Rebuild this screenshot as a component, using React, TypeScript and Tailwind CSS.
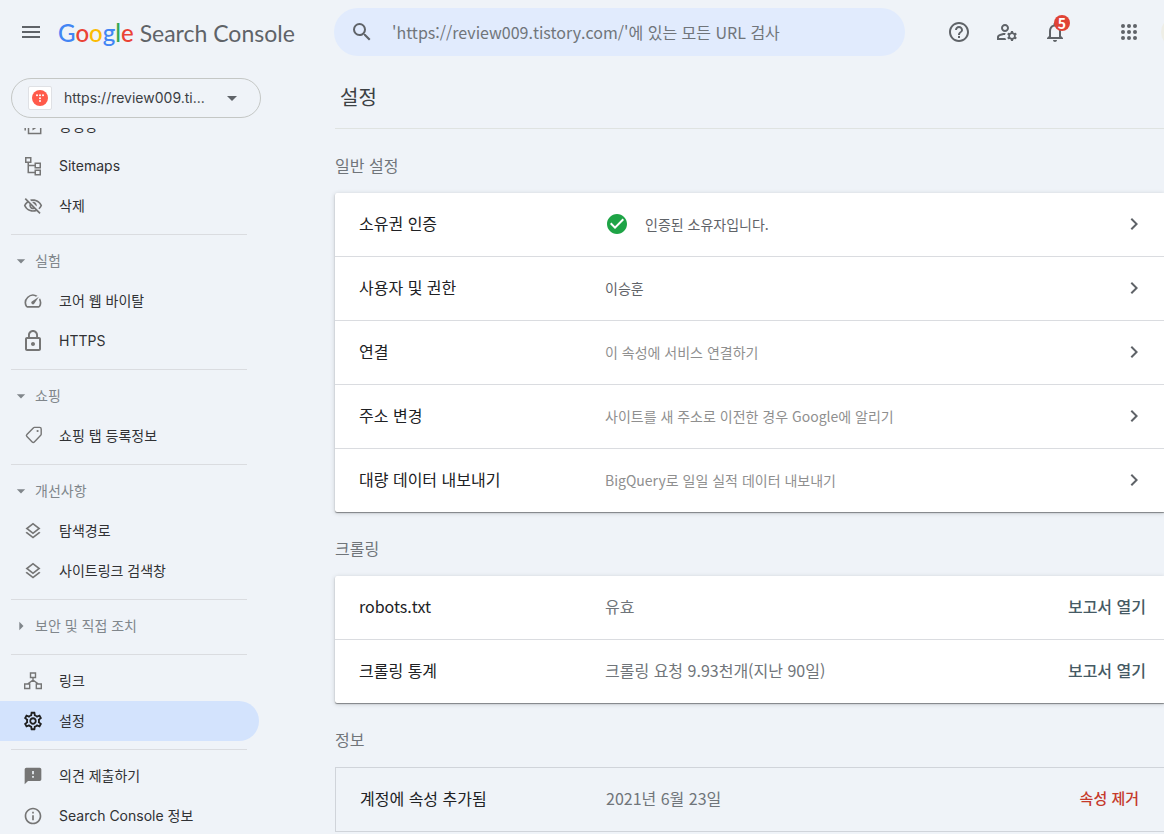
import type { ReactNode } from "react";
import {
  MdArrowDropDown,
  MdArrowRight,
  MdCheckCircle,
  MdChevronRight,
  MdFeedback,
  MdHelpOutline,
  MdInfoOutline,
  MdLockOutline,
  MdMenu,
  MdNotificationsNone,
  MdOutlineLayers,
  MdOutlineManageAccounts,
  MdOutlineSettings,
  MdOutlineVisibilityOff,
  MdSearch,
  MdSpeed,
} from "react-icons/md";

type NavItem = { label: string; icon: ReactNode; active?: boolean };
type NavGroup = { title?: string; collapsed?: boolean; items: NavItem[] };

function VideoPagesIcon() {
  return (
    <svg width="20" height="20" viewBox="0 0 20 20" fill="none" stroke="currentColor" strokeWidth="1.5">
      <path d="M2.2 4v10.5M5.5 4h12.2v13.6H5.5z" />
      <path d="M9.5 8.5v6l4.8-3.2z" fill="currentColor" stroke="none" />
    </svg>
  );
}

function SitemapIcon() {
  return (
    <svg width="20" height="20" viewBox="0 0 20 20" fill="none" stroke="currentColor" strokeWidth="1.5">
      <path d="M2.75 1.75h5v4.5h-5zM12.25 7.25h5v4.5h-5zM12.25 14.25h5v4.5h-5zM5.25 6.5v10h7M5.25 9.5h7" />
    </svg>
  );
}

function LinksIcon() {
  return (
    <svg width="20" height="20" viewBox="0 0 20 20" fill="none" stroke="currentColor" strokeWidth="1.4">
      <path d="M7.5 2h5v4.5h-5zM1.7 13h5v4.5h-5zM13.3 13h5v4.5h-5zM10 6.5v3M4.5 13 10 9.2l5.5 3.8" />
    </svg>
  );
}

function TagIcon() {
  return (
    <svg width="20" height="20" viewBox="0 0 20 20" fill="none" stroke="currentColor" strokeWidth="1.4">
      <path
        d="M11.4 1.4h5.2c.9 0 1.6.7 1.6 1.6v5.2c0 .4-.2.8-.5 1.1l-6.4 6.6c-.6.6-1.5.6-2.1 0l-5.3-5.3c-.6-.6-.6-1.5 0-2.1l6.4-6.6c.3-.3.7-.5 1.1-.5z"
        strokeLinejoin="round"
      />
      <circle cx="14.6" cy="5" r="1.1" fill="currentColor" stroke="none" />
    </svg>
  );
}

function AppsIcon() {
  return (
    <svg width="24" height="24" viewBox="0 0 24 24" fill="currentColor">
      {[6, 12, 18].map((y) => [6, 12, 18].map((x) => <circle key={`${x}-${y}`} cx={x} cy={y} r="2" />))}
    </svg>
  );
}

function Favicon() {
  return (
    <span className="flex size-6 shrink-0 items-center justify-center rounded-xs border border-[#dfe1e5] bg-white">
      <svg width="16" height="16" viewBox="0 0 16 16">
        <circle cx="8" cy="8" r="8" fill="#ff5a4a" />
        <g fill="#fff">
          <circle cx="5" cy="5.3" r="1" />
          <circle cx="8" cy="5.3" r="1" />
          <circle cx="11" cy="5.3" r="1" />
          <circle cx="8" cy="8.2" r="1" />
          <circle cx="8" cy="11.1" r="1" />
        </g>
      </svg>
    </span>
  );
}

const navGroups: NavGroup[] = [
  {
    items: [
      { label: "동영상", icon: <VideoPagesIcon /> },
      { label: "Sitemaps", icon: <SitemapIcon /> },
      { label: "삭제", icon: <MdOutlineVisibilityOff size={20} /> },
    ],
  },
  {
    title: "실험",
    items: [
      { label: "코어 웹 바이탈", icon: <MdSpeed size={20} /> },
      { label: "HTTPS", icon: <MdLockOutline size={24} /> },
    ],
  },
  { title: "쇼핑", items: [{ label: "쇼핑 탭 등록정보", icon: <TagIcon /> }] },
  {
    title: "개선사항",
    items: [
      { label: "탐색경로", icon: <MdOutlineLayers size={20} /> },
      { label: "사이트링크 검색창", icon: <MdOutlineLayers size={20} /> },
    ],
  },
  { title: "보안 및 직접 조치", collapsed: true, items: [] },
  {
    items: [
      { label: "링크", icon: <LinksIcon /> },
      { label: "설정", icon: <MdOutlineSettings size={22} />, active: true },
    ],
  },
  {
    items: [
      { label: "의견 제출하기", icon: <MdFeedback size={20} /> },
      { label: "Search Console 정보", icon: <MdInfoOutline size={20} /> },
    ],
  },
];

const generalRows = [
  { label: "소유권 인증", value: "인증된 소유자입니다.", verified: true, tone: "text-[#5f6368]" },
  { label: "사용자 및 권한", value: "이승훈", tone: "text-[#5f6368]" },
  { label: "연결", value: "이 속성에 서비스 연결하기", tone: "text-[#8f8f8f]" },
  { label: "주소 변경", value: "사이트를 새 주소로 이전한 경우 Google에 알리기", tone: "text-[#8f8f8f]" },
  { label: "대량 데이터 내보내기", value: "BigQuery로 일일 실적 데이터 내보내기", tone: "text-[#8f8f8f]" },
];

const crawlRows = [
  { label: "robots.txt", value: "유효" },
  { label: "크롤링 통계", value: "크롤링 요청 9.93천개(지난 90일)" },
];

function Logo() {
  return (
    <a href="#" className="flex items-baseline gap-1.5 font-['Lato',sans-serif] whitespace-nowrap text-[#5f6368]">
      <span className="text-2xl font-medium">
        <span className="text-[#4285f4]">G</span>
        <span className="text-[#ea4335]">o</span>
        <span className="text-[#fbbc04]">o</span>
        <span className="text-[#4285f4]">g</span>
        <span className="text-[#34a853]">l</span>
        <span className="text-[#ea4335]">e</span>
      </span>
      <span className="text-[23px]">Search Console</span>
    </a>
  );
}

function IconButton({ label, children }: { label: string; children: ReactNode }) {
  return (
    <button type="button" aria-label={label} className="relative flex size-12 shrink-0 items-center justify-center text-[#5f6368]">
      {children}
    </button>
  );
}

function Header() {
  return (
    <header className="flex h-16 shrink-0 items-center overflow-hidden">
      <div className="flex w-[334px] shrink-0 items-center pl-[7px]">
        <IconButton label="메뉴">
          <MdMenu size={24} />
        </IconButton>
        <div className="pt-0.5 pl-[3px]">
          <Logo />
        </div>
      </div>
      <label className="flex h-12 min-w-0 flex-1 items-center gap-[18px] rounded-full bg-[#e1ebfd] px-4">
        <MdSearch size={24} className="shrink-0 text-[#5f6368]" />
        <input
          type="text"
          aria-label="URL 검사"
          placeholder="'https://review009.tistory.com/'에 있는 모든 URL 검사"
          className="min-w-0 flex-1 bg-transparent text-base outline-none placeholder:text-[#70757a]"
        />
      </label>
      <div className="flex shrink-0 items-center pl-[30px]">
        <IconButton label="도움말">
          <MdHelpOutline size={24} />
        </IconButton>
        <IconButton label="사용자 설정">
          <MdOutlineManageAccounts size={24} />
        </IconButton>
        <IconButton label="알림">
          <MdNotificationsNone size={24} />
          <span className="absolute top-[7px] right-[9px] flex size-4 items-center justify-center rounded-full bg-[#e04336] text-sm leading-4 font-bold text-white">
            5
          </span>
        </IconButton>
        <div className="pl-[26px]">
          <IconButton label="Google 앱">
            <AppsIcon />
          </IconButton>
        </div>
        <div className="flex w-[11px] pl-2">
          <button type="button" aria-label="계정" className="size-8 shrink-0 rounded-full bg-[#eeeee6]" />
        </div>
      </div>
    </header>
  );
}

function NavLink({ item }: { item: NavItem }) {
  return (
    <li>
      <a
        href="#"
        aria-current={item.active ? "page" : undefined}
        className={
          item.active
            ? "mr-0.5 flex h-10 items-center rounded-r-full bg-[#d3e3fd] text-[#1f1f1f]"
            : "mr-0.5 flex h-10 items-center text-[#757575]"
        }
      >
        <span className="ml-5 flex w-[26px] shrink-0 justify-center">{item.icon}</span>
        <span className="ml-[13px] text-[#303134]">{item.label}</span>
      </a>
    </li>
  );
}

function Sidebar() {
  return (
    <aside className="flex w-[261px] shrink-0 flex-col font-['Inter','Noto_Sans_CJK_KR',sans-serif] text-sm">
      <div className="shrink-0 pt-[14px] pb-[10px] pl-[11px]">
        <button
          type="button"
          className="flex h-10 w-full items-center rounded-full border border-[#c4c7c5] px-4 text-[#3c4043]"
        >
          <Favicon />
          <span className="ml-3 flex-1 truncate text-left">https://review009.ti...</span>
          <MdArrowDropDown size={24} className="shrink-0 text-[#5f6368]" />
        </button>
      </div>
      <nav className="min-h-0 flex-1 overflow-hidden">
        {/* list is scrolled part of a row under the property picker */}
        <div className="-mt-[22px]">
          {navGroups.map((group, i) => (
            <section key={i}>
              {i > 0 && <hr className="mt-2 mr-[14px] mb-1.5 ml-[11px] border-[#dadce0]" />}
              {group.title && (
                <button
                  type="button"
                  aria-expanded={!group.collapsed}
                  className="flex h-10 w-full items-center gap-1 pl-[11px] text-[#80868b]"
                >
                  {group.collapsed ? <MdArrowRight size={20} /> : <MdArrowDropDown size={20} />}
                  {group.title}
                </button>
              )}
              <ul>
                {group.items.map((item) => (
                  <NavLink key={item.label} item={item} />
                ))}
              </ul>
            </section>
          ))}
        </div>
      </nav>
    </aside>
  );
}

function SectionTitle({ children }: { children: ReactNode }) {
  return <h2 className="pt-6 pb-4 text-base leading-6 text-[#70757a]">{children}</h2>;
}

function Card({ children }: { children: ReactNode }) {
  return (
    <div className="divide-y divide-[#dadce0] rounded-l-xs bg-white shadow-[0_1px_1px_rgba(0,0,0,0.4),0_1px_4px_rgba(60,64,67,0.25)]">
      {children}
    </div>
  );
}

function RowLabel({ children }: { children: ReactNode }) {
  return <span className="w-[246px] shrink-0 pb-0.5 text-base text-[#202124]">{children}</span>;
}

function Settings() {
  return (
    <main className="min-w-0 flex-1 pl-[74px]">
      <div className="flex h-[65px] items-center border-b border-[#dfe3e1] pt-0.5 pl-[5px]">
        <h1 className="text-xl text-[#3c4043]">설정</h1>
      </div>

      <SectionTitle>일반 설정</SectionTitle>
      <Card>
        {generalRows.map((row) => (
          <a key={row.label} href="#" className="box-content flex h-[61px] items-center pb-0.5 pl-6">
            <RowLabel>{row.label}</RowLabel>
            {row.verified && <MdCheckCircle size={24} className="mr-4 shrink-0 text-[#1ea446]" />}
            <span className={`flex-1 text-sm ${row.tone}`}>{row.value}</span>
            <MdChevronRight size={24} className="mr-[18px] shrink-0 text-[#5f6368]" />
          </a>
        ))}
      </Card>

      <SectionTitle>크롤링</SectionTitle>
      <Card>
        {crawlRows.map((row) => (
          <div key={row.label} className="box-content flex h-[61px] items-center pb-0.5 pl-6">
            <RowLabel>{row.label}</RowLabel>
            <span className="flex-1 pb-0.5 text-base text-[#70757a]">{row.value}</span>
            <button type="button" className="mr-[18px] pb-0.5 text-base font-medium text-[#455a64]">
              보고서 열기
            </button>
          </div>
        ))}
      </Card>

      <SectionTitle>정보</SectionTitle>
      <div className="flex h-[65px] items-center border border-r-0 border-[#d0d4da] pb-0.5 pl-6">
        <RowLabel>계정에 속성 추가됨</RowLabel>
        <span className="flex-1 pb-0.5 text-base text-[#70757a]">2021년 6월 23일</span>
        <button type="button" className="mr-[25px] text-[15px] font-medium text-[#c5392b]">
          속성 제거
        </button>
      </div>
    </main>
  );
}

export default function App() {
  return (
    <div lang="ko" className="flex h-screen flex-col overflow-hidden bg-[#eff3f8] font-['Noto_Sans_CJK_KR',sans-serif]">
      <Header />
      <div className="flex min-h-0 flex-1">
        <Sidebar />
        <Settings />
      </div>
    </div>
  );
}
